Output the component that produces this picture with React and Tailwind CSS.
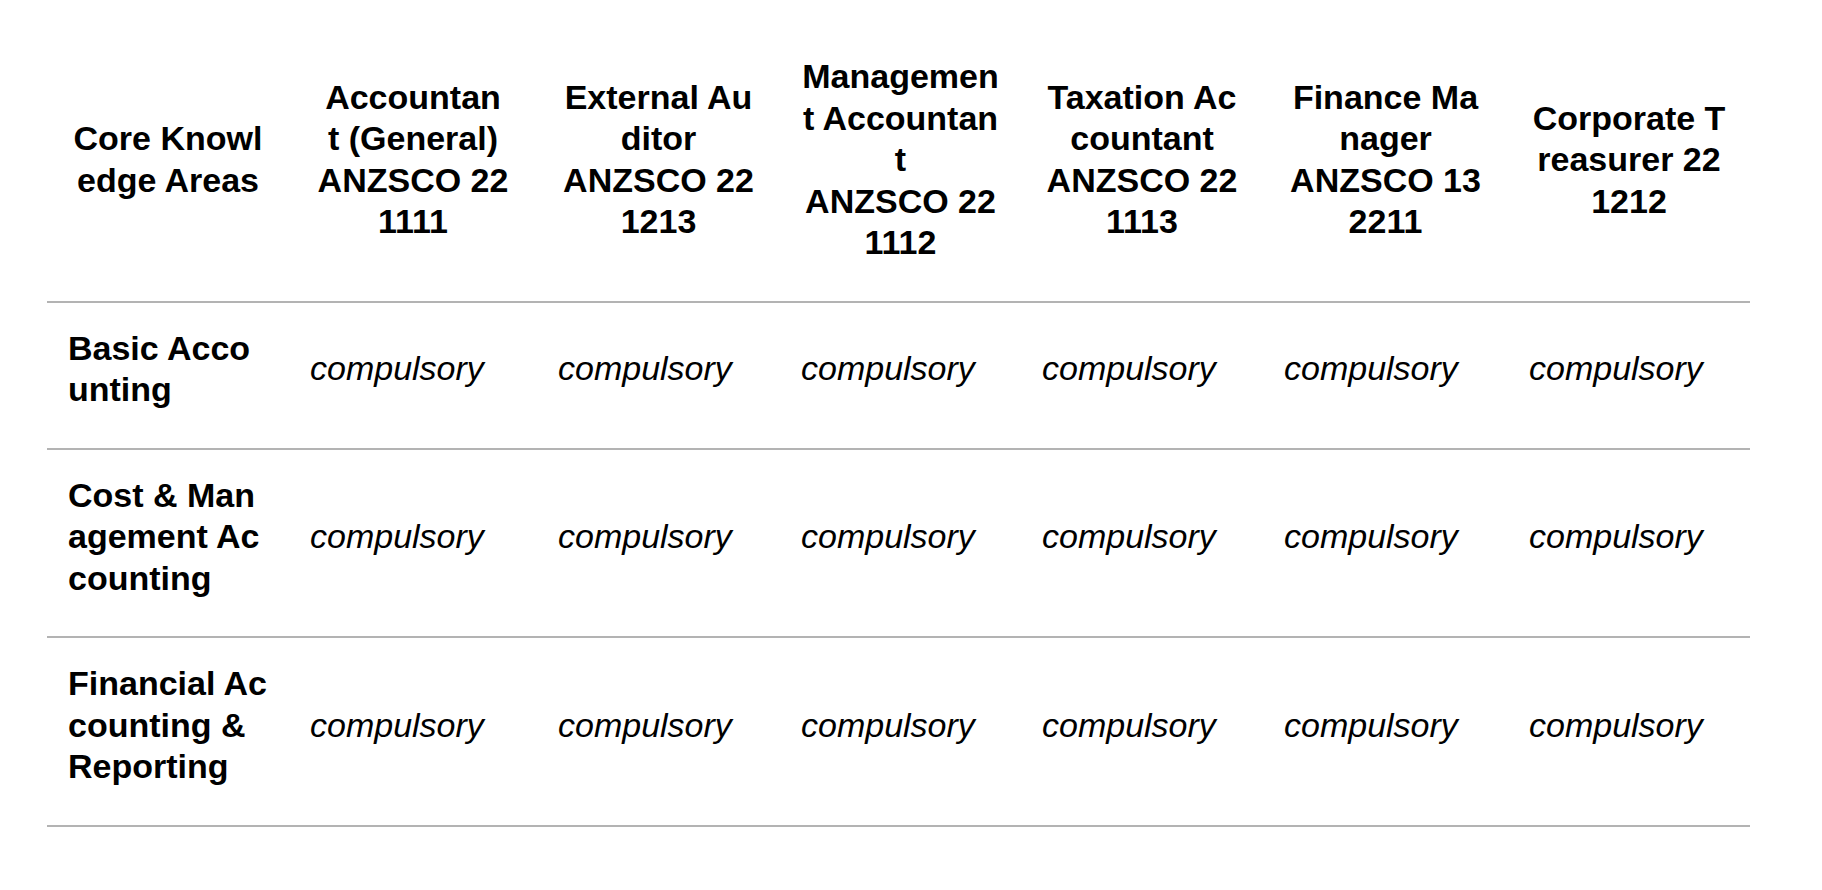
import React from "react";

const headers = [
  ["Core Knowl", "edge Areas"],
  ["Accountan", "t (General)", "ANZSCO 22", "1111"],
  ["External Au", "ditor", "ANZSCO 22", "1213"],
  ["Managemen", "t Accountan", "t", "ANZSCO 22", "1112"],
  ["Taxation Ac", "countant", "ANZSCO 22", "1113"],
  ["Finance Ma", "nager", "ANZSCO 13", "2211"],
  ["Corporate T", "reasurer 22", "1212"],
];

const rows = [
  ["Basic Acco", "unting"],
  ["Cost & Man", "agement Ac", "counting"],
  ["Financial Ac", "counting &", "Reporting"],
];

const widths = ["w-[242px]", "w-[248px]", "w-[243px]", "w-[241px]", "w-[242px]", "w-[245px]", "w-[242px]"];

export default function App() {
  return (
    <div
      className="min-h-[890px] bg-white text-black pt-[17px] pl-[47px]"
      style={{ fontFamily: '"Liberation Sans", Arial, sans-serif' }}
    >
      <table className="table-fixed border-collapse w-[1703px] text-[34px] leading-[41.5px]">
        <colgroup>
          {widths.map((w, i) => (
            <col key={i} className={w} />
          ))}
        </colgroup>
        <thead>
          <tr className="border-b-2 border-[#b3b3b3]">
            {headers.map((lines, i) => (
              <th key={i} className="pt-[39px] pb-[37px] px-[10px] text-center align-middle font-bold">
                {lines.map((l, j) => (
                  <span key={j} className="block whitespace-nowrap">
                    {l}
                  </span>
                ))}
              </th>
            ))}
          </tr>
        </thead>
        <tbody>
          {rows.map((lines, r) => (
            <tr key={r} className="border-b-2 border-[#b3b3b3]">
              <td className="pt-[25px] pb-[37px] pl-[21px] pr-[10px] align-middle font-bold">
                {lines.map((l, j) => (
                  <span key={j} className="block whitespace-nowrap">
                    {l}
                  </span>
                ))}
              </td>
              {[0, 1, 2, 3, 4, 5].map((c) => (
                <td key={c} className="pt-[25px] pb-[37px] pl-[21px] pr-[10px] align-middle italic whitespace-nowrap">
                  compulsory
                </td>
              ))}
            </tr>
          ))}
        </tbody>
      </table>
    </div>
  );
}
